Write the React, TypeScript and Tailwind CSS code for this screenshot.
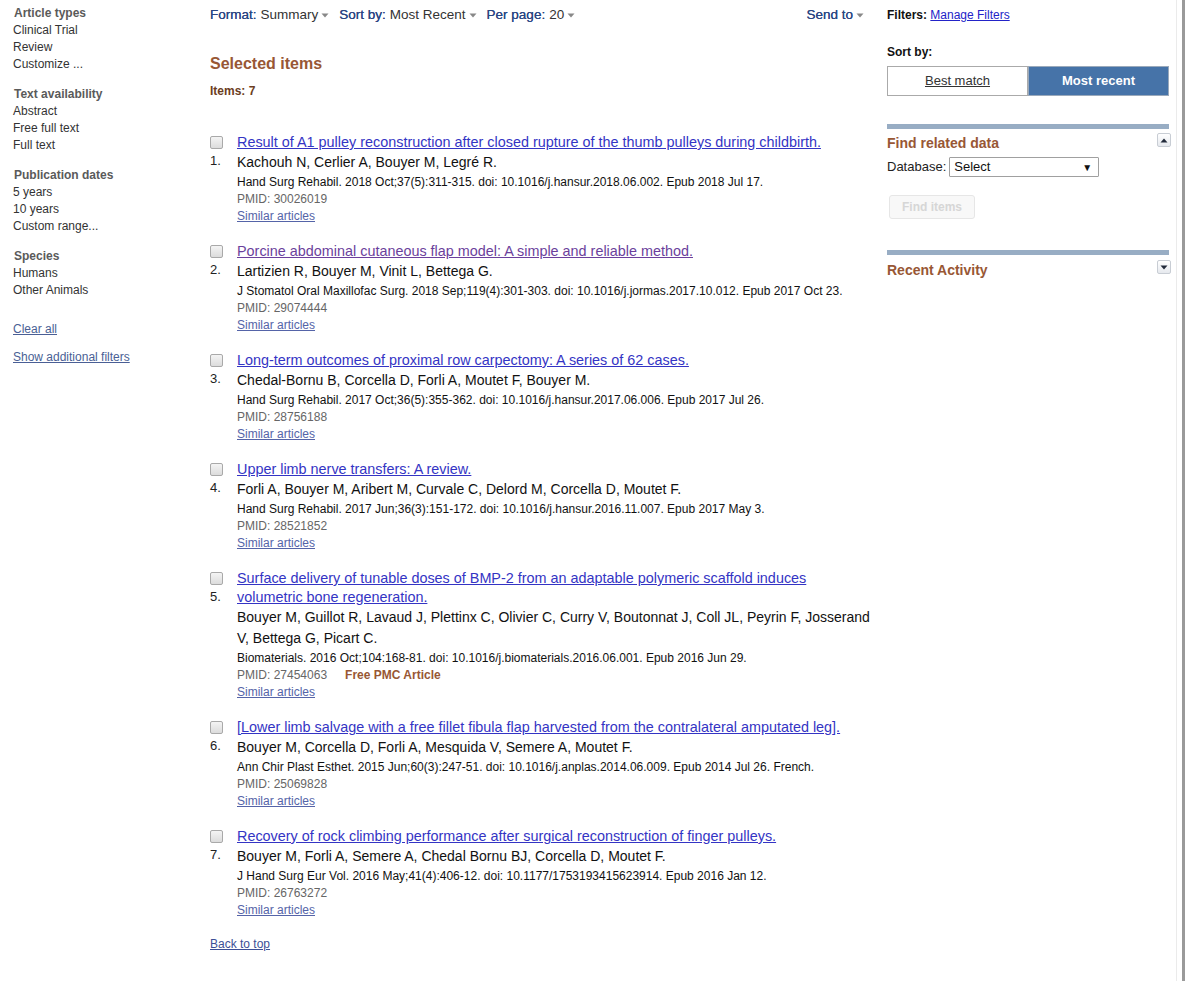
import React from "react";

interface Article {
  title: string;
  visited?: boolean;
  authors: string;
  citation: string;
  pmid: string;
  freePmc?: boolean;
}

const articles: Article[] = [
  {
    title:
      "Result of A1 pulley reconstruction after closed rupture of the thumb pulleys during childbirth.",
    authors: "Kachouh N, Cerlier A, Bouyer M, Legré R.",
    citation:
      "Hand Surg Rehabil. 2018 Oct;37(5):311-315. doi: 10.1016/j.hansur.2018.06.002. Epub 2018 Jul 17.",
    pmid: "30026019",
  },
  {
    title: "Porcine abdominal cutaneous flap model: A simple and reliable method.",
    visited: true,
    authors: "Lartizien R, Bouyer M, Vinit L, Bettega G.",
    citation:
      "J Stomatol Oral Maxillofac Surg. 2018 Sep;119(4):301-303. doi: 10.1016/j.jormas.2017.10.012. Epub 2017 Oct 23.",
    pmid: "29074444",
  },
  {
    title: "Long-term outcomes of proximal row carpectomy: A series of 62 cases.",
    authors: "Chedal-Bornu B, Corcella D, Forli A, Moutet F, Bouyer M.",
    citation:
      "Hand Surg Rehabil. 2017 Oct;36(5):355-362. doi: 10.1016/j.hansur.2017.06.006. Epub 2017 Jul 26.",
    pmid: "28756188",
  },
  {
    title: "Upper limb nerve transfers: A review.",
    authors: "Forli A, Bouyer M, Aribert M, Curvale C, Delord M, Corcella D, Moutet F.",
    citation:
      "Hand Surg Rehabil. 2017 Jun;36(3):151-172. doi: 10.1016/j.hansur.2016.11.007. Epub 2017 May 3.",
    pmid: "28521852",
  },
  {
    title:
      "Surface delivery of tunable doses of BMP-2 from an adaptable polymeric scaffold induces volumetric bone regeneration.",
    authors:
      "Bouyer M, Guillot R, Lavaud J, Plettinx C, Olivier C, Curry V, Boutonnat J, Coll JL, Peyrin F, Josserand V, Bettega G, Picart C.",
    citation:
      "Biomaterials. 2016 Oct;104:168-81. doi: 10.1016/j.biomaterials.2016.06.001. Epub 2016 Jun 29.",
    pmid: "27454063",
    freePmc: true,
  },
  {
    title:
      "[Lower limb salvage with a free fillet fibula flap harvested from the contralateral amputated leg].",
    authors: "Bouyer M, Corcella D, Forli A, Mesquida V, Semere A, Moutet F.",
    citation:
      "Ann Chir Plast Esthet. 2015 Jun;60(3):247-51. doi: 10.1016/j.anplas.2014.06.009. Epub 2014 Jul 26. French.",
    pmid: "25069828",
  },
  {
    title:
      "Recovery of rock climbing performance after surgical reconstruction of finger pulleys.",
    authors: "Bouyer M, Forli A, Semere A, Chedal Bornu BJ, Corcella D, Moutet F.",
    citation:
      "J Hand Surg Eur Vol. 2016 May;41(4):406-12. doi: 10.1177/1753193415623914. Epub 2016 Jan 12.",
    pmid: "26763272",
  },
];

const filterGroups = [
  { heading: "Article types", items: ["Clinical Trial", "Review", "Customize ..."] },
  { heading: "Text availability", items: ["Abstract", "Free full text", "Full text"] },
  { heading: "Publication dates", items: ["5 years", "10 years", "Custom range..."] },
  { heading: "Species", items: ["Humans", "Other Animals"] },
];

const Caret = () => (
  <svg width="8" height="5" viewBox="0 0 8 5" className="ml-[3px] inline-block">
    <path d="M0.5 0.5 L7.5 0.5 L4 4.5 Z" fill="#888" />
  </svg>
);

const ToggleButton = ({ up }: { up: boolean }) => (
  <div className="w-[14px] h-[14px] border border-[#c8cdd4] rounded-[2px] bg-gradient-to-b from-white to-[#e6e9ee] flex items-center justify-center">
    <svg width="8" height="5" viewBox="0 0 8 5">
      {up ? (
        <path d="M0.5 4.5 L7.5 4.5 L4 0.5 Z" fill="#222a3a" />
      ) : (
        <path d="M0.5 0.5 L7.5 0.5 L4 4.5 Z" fill="#222a3a" />
      )}
    </svg>
  </div>
);

const Sidebar = () => (
  <div className="w-[210px] shrink-0 pl-[13px] pt-[5px]">
    {filterGroups.map((g) => (
      <div key={g.heading} className="mb-[13px]">
        <div className="text-[12px] leading-[17px] font-bold text-[#5a5a5a] pl-px">
          {g.heading}
        </div>
        {g.items.map((it) => (
          <div key={it} className="text-[12px] leading-[17px] text-[#333]">
            {it}
          </div>
        ))}
      </div>
    ))}
    <div className="mt-[22px] text-[12px] leading-[17px] text-[#4a5f95] underline">
      Clear all
    </div>
    <div className="mt-[11px] text-[12px] leading-[17px] text-[#4a5f95] underline">
      Show additional filters
    </div>
  </div>
);

const ArticleRow = ({ a, n }: { a: Article; n: number }) => (
  <div className="flex pb-[18px]">
    <div className="w-[27px] shrink-0 flex flex-col">
      <div className="mt-[3px] w-[13px] h-[13px] border border-[#a9a9a9] rounded-[2px] bg-gradient-to-b from-[#f4f4f4] to-[#dcdcdc]" />
      <div className="mt-[2px] text-[13px] leading-[19px] text-[#222]">{n}.</div>
    </div>
    <div className="flex-1 min-w-0">
      <div
        className={`text-[14.4px] leading-[19px] underline ${
          a.visited ? "text-[#6b3f9c]" : "text-[#3434c4]"
        }`}
      >
        {a.title}
      </div>
      <div className="text-[14px] leading-[21px] text-[#111]">{a.authors}</div>
      <div className="text-[12px] leading-[18px] text-[#111]">{a.citation}</div>
      <div className="text-[12px] leading-[17px] text-[#666]">
        PMID: {a.pmid}
        {a.freePmc && (
          <span className="ml-[18px] font-bold text-[#985735]">Free PMC Article</span>
        )}
      </div>
      <div className="text-[12px] leading-[16px] text-[#5564a8] underline">
        Similar articles
      </div>
    </div>
  </div>
);

const MainColumn = () => (
  <div className="w-[660px] shrink-0 pt-[7px]">
    <div className="flex items-center h-[16px] text-[13.5px] pr-[6px]">
      <span className="text-[#2b4683] [text-shadow:0_0_0.3px_#2b4683]">Format:</span>
      <span className="ml-[4px] text-[#333]">Summary</span>
      <Caret />
      <span className="ml-[10px] text-[#2b4683] [text-shadow:0_0_0.3px_#2b4683]">Sort by:</span>
      <span className="ml-[4px] text-[#333]">Most Recent</span>
      <Caret />
      <span className="ml-[10px] text-[#2b4683] [text-shadow:0_0_0.3px_#2b4683]">Per page:</span>
      <span className="ml-[4px] text-[#333]">20</span>
      <Caret />
      <span className="ml-auto text-[#2b4683] [text-shadow:0_0_0.3px_#2b4683]">Send to</span>
      <Caret />
    </div>
    <div className="mt-[31px] text-[16px] leading-[20px] font-bold text-[#985735]">
      Selected items
    </div>
    <div className="mt-[9px] text-[12px] leading-[16px] font-bold text-[#6b3d22]">
      Items: 7
    </div>
    <div className="mt-[34px]">
      {articles.map((a, i) => (
        <ArticleRow key={a.pmid} a={a} n={i + 1} />
      ))}
    </div>
    <div className="text-[12px] leading-[16px] text-[#3c4f96] underline">
      Back to top
    </div>
  </div>
);

const RightColumn = () => (
  <div className="w-[282px] shrink-0 ml-[17px] pt-[7px]">
    <div className="text-[12px] leading-[16px] text-[#111]">
      <span className="font-bold">Filters: </span>
      <span className="text-[#2323c8] underline">Manage Filters</span>
    </div>
    <div className="mt-[21px] text-[12px] leading-[16px] font-bold text-[#111]">Sort by:</div>
    <div className="mt-[6px] flex h-[30px] w-[282px]">
      <div className="w-[141px] border border-[#aaa] bg-white flex items-center justify-center text-[13px] text-[#333] underline">
        Best match
      </div>
      <div className="flex-1 border border-[#9aa9bb] bg-[#4673a8] flex items-center justify-center text-[13px] font-bold text-white">
        Most recent
      </div>
    </div>
    <div className="mt-[28px] h-[5px] bg-[#98adc4]" />
    <div className="mt-[4px] flex items-start justify-between">
      <div className="mt-[1px] text-[14px] leading-[18px] font-bold text-[#985735]">
        Find related data
      </div>
      <div className="mr-[-2px]">
        <ToggleButton up />
      </div>
    </div>
    <div className="mt-[5px] flex items-center text-[13px] text-[#222]">
      <span>Database:</span>
      <div className="ml-[3px] w-[150px] h-[20px] border border-[#a0a0a0] rounded-[1px] flex items-center justify-between px-[4px] text-[13px] text-[#111]">
        <span>Select</span>
        <span className="text-[10px] pr-[2px]">▼</span>
      </div>
    </div>
    <div className="mt-[18px] ml-[2px] w-[86px] h-[24px] border border-[#e6e6e6] rounded-[3px] bg-[#f8f8f8] flex items-center justify-center text-[12px] font-bold text-[#d6d6d6]">
      Find items
    </div>
    <div className="mt-[31px] h-[5px] bg-[#98adc4]" />
    <div className="mt-[5px] flex items-start justify-between">
      <div className="mt-[1px] text-[14px] leading-[18px] font-bold text-[#985735]">
        Recent Activity
      </div>
      <div className="mr-[-2px]">
        <ToggleButton up={false} />
      </div>
    </div>
  </div>
);

export default function App() {
  return (
    <div className="min-h-[981px] w-[1186px] flex bg-white font-['Liberation_Sans',Arial,sans-serif]">
      <div className="w-[1176px] flex">
        <Sidebar />
        <MainColumn />
        <RightColumn />
      </div>
      <div className="w-px bg-[#ebebeb]" />
      <div className="w-[5px]" />
      <div className="w-[3px] bg-[#9a9a9a]" />
      <div className="w-px" />
    </div>
  );
}
